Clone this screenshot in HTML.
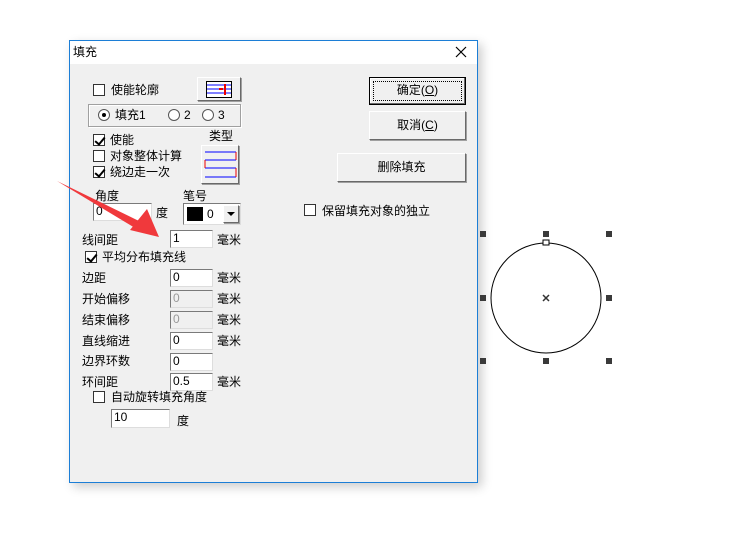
<!DOCTYPE html>
<html><head><meta charset="utf-8"><style>
*{margin:0;padding:0;box-sizing:border-box}
body{width:735px;height:546px;background:#fff;position:relative;overflow:hidden;font-family:"Liberation Sans","Noto Sans CJK SC",sans-serif;font-size:12px;color:#000}
.a{position:absolute}
.t{position:absolute;line-height:14px;white-space:nowrap}
.cb{position:absolute;width:12px;height:12px;background:#fff;border:1px solid #333}
.cb.c::after{content:"";position:absolute;left:3px;top:0px;width:4px;height:8px;border:solid #000;border-width:0 2px 2px 0;transform:rotate(40deg)}
.rd{position:absolute;width:12px;height:12px;border-radius:50%;background:#fff;border:1px solid #555}
.rd.c::after{content:"";position:absolute;left:3px;top:3px;width:4px;height:4px;border-radius:50%;background:#000}
.in{position:absolute;background:#fff;border:1px solid #7a7a7a;border-right-color:#ddd;border-bottom-color:#ddd;line-height:15px;padding-left:2px;font-size:12px}
.in.d{background:#f0f0f0;color:#999}
.btn{position:absolute;background:#f0f0f0;border:1px solid #fff;border-right-color:#696969;border-bottom-color:#696969;box-shadow:1px 1px 0 #a0a0a0;text-align:center}
</style></head><body>
<div class="a" style="left:69px;top:40px;width:409px;height:443px;border:1px solid #1c7ed6;background:#f0f0f0;box-shadow:4px 4px 10px rgba(0,0,0,.2)">
<div class="a" style="left:0;top:0;width:407px;height:23px;background:#fff"></div>
</div>
<div class="t" style="left:73px;top:45px">填充</div>
<svg class="a" style="left:455px;top:46px" width="12" height="12"><path d="M1 1L11 11M11 1L1 11" stroke="#000" stroke-width="1.2"/></svg>

<div class="cb" style="left:93px;top:84px"></div><div class="t" style="left:111px;top:83px">使能轮廓</div>
<div class="btn" style="left:197px;top:77px;width:44px;height:24px"></div>
<svg class="a" style="left:206px;top:81px" width="26" height="17"><rect x="0.5" y="0.5" width="25" height="16" fill="#fff" stroke="#000"/><path d="M1 4H25M1 8H25M1 12H25" stroke="#00f"/><path d="M13 8H17M19 3V14" stroke="#e00" stroke-width="2"/></svg>
<div class="a" style="left:88px;top:104px;width:153px;height:23px;border:1px solid #a0a0a0;box-shadow:inset 1px 1px 0 #fff,1px 1px 0 #fff"></div>
<div class="rd c" style="left:98px;top:109px"></div><div class="t" style="left:115px;top:108px">填充1</div>
<div class="rd" style="left:168px;top:109px"></div><div class="t" style="left:184px;top:108px">2</div>
<div class="rd" style="left:202px;top:109px"></div><div class="t" style="left:218px;top:108px">3</div>

<div class="t" style="left:209px;top:129px">类型</div>
<div class="cb c" style="left:93px;top:134px"></div><div class="t" style="left:110px;top:133px">使能</div>
<div class="cb" style="left:93px;top:150px"></div><div class="t" style="left:110px;top:149px">对象整体计算</div>
<div class="cb c" style="left:93px;top:166px"></div><div class="t" style="left:110px;top:165px">绕边走一次</div>
<div class="btn" style="left:201px;top:145px;width:38px;height:39px"></div>
<svg class="a" style="left:203px;top:148px" width="35" height="34"><path d="M2 4H33M2 12H33M2 20H33M2 29H33" stroke="#00f"/><path d="M33 4V12M2 12V20M33 20V29" stroke="#e00"/></svg>

<div class="t" style="left:95px;top:189px">角度</div>
<div class="in" style="left:93px;top:203px;width:59px;height:18px">0</div>
<div class="t" style="left:156px;top:206px">度</div>
<div class="t" style="left:183px;top:189px">笔号</div>
<div class="in" style="left:183px;top:203px;width:58px;height:22px;background:#fff"></div>
<div class="a" style="left:187px;top:207px;width:16px;height:14px;background:#000"></div>
<div class="t" style="left:207px;top:207px">0</div>
<div class="btn" style="left:223px;top:205px;width:16px;height:18px"></div>
<svg class="a" style="left:227px;top:212px" width="8" height="5"><path d="M0 0H8L4 4Z" fill="#000"/></svg>

<div class="t" style="left:82px;top:233px">线间距</div><div class="in" style="left:170px;top:230px;width:43px;height:18px">1</div><div class="t" style="left:217px;top:233px">毫米</div>
<div class="cb c" style="left:85px;top:251px"></div><div class="t" style="left:102px;top:250px">平均分布填充线</div>
<div class="t" style="left:82px;top:271px">边距</div><div class="in" style="left:170px;top:269px;width:43px;height:18px">0</div><div class="t" style="left:217px;top:271px">毫米</div>
<div class="t" style="left:82px;top:292px">开始偏移</div><div class="in d" style="left:170px;top:290px;width:43px;height:18px">0</div><div class="t" style="left:217px;top:292px">毫米</div>
<div class="t" style="left:82px;top:313px">结束偏移</div><div class="in d" style="left:170px;top:311px;width:43px;height:18px">0</div><div class="t" style="left:217px;top:313px">毫米</div>
<div class="t" style="left:82px;top:334px">直线缩进</div><div class="in" style="left:170px;top:332px;width:43px;height:18px">0</div><div class="t" style="left:217px;top:334px">毫米</div>
<div class="t" style="left:82px;top:354px">边界环数</div><div class="in" style="left:170px;top:353px;width:43px;height:18px">0</div>
<div class="t" style="left:82px;top:375px">环间距</div><div class="in" style="left:170px;top:373px;width:43px;height:18px">0.5</div><div class="t" style="left:217px;top:375px">毫米</div>
<div class="cb" style="left:93px;top:391px"></div><div class="t" style="left:111px;top:390px">自动旋转填充角度</div>
<div class="in" style="left:111px;top:409px;width:59px;height:19px">10</div><div class="t" style="left:177px;top:414px">度</div>

<div class="btn" style="left:369px;top:77px;width:97px;height:28px;border:1px solid #000;box-shadow:inset -1px -1px 0 #696969,inset 1px 1px 0 #fff;line-height:24px"><div style="position:absolute;left:3px;top:3px;right:3px;bottom:3px;border:1px dotted #000"></div>确定(<u>O</u>)</div>
<div class="btn" style="left:369px;top:111px;width:97px;height:29px;line-height:27px">取消(<u>C</u>)</div>
<div class="btn" style="left:337px;top:153px;width:129px;height:29px;line-height:27px">删除填充</div>
<div class="cb" style="left:304px;top:204px"></div><div class="t" style="left:322px;top:204px">保留填充对象的独立</div>

<svg class="a" style="left:0;top:0" width="735" height="546">
<path d="M57 181L143 223L140 231Z" fill="#f0393c"/>
<path d="M159 237L130 230L147 209Z" fill="#f0393c"/>
<circle cx="546" cy="298" r="55" fill="none" stroke="#000" stroke-width="1"/>
<rect x="543" y="240" width="6" height="5" fill="#fff" stroke="#000"/>
<path d="M543 295L549 301M549 295L543 301" stroke="#333" stroke-width="1.5"/>
<g fill="#3a3a3a">
<rect x="480" y="231" width="6" height="6"/><rect x="543" y="231" width="6" height="6"/><rect x="606" y="231" width="6" height="6"/>
<rect x="480" y="295" width="6" height="6"/><rect x="606" y="295" width="6" height="6"/>
<rect x="480" y="358" width="6" height="6"/><rect x="543" y="358" width="6" height="6"/><rect x="606" y="358" width="6" height="6"/>
</g>
</svg>
</body></html>
